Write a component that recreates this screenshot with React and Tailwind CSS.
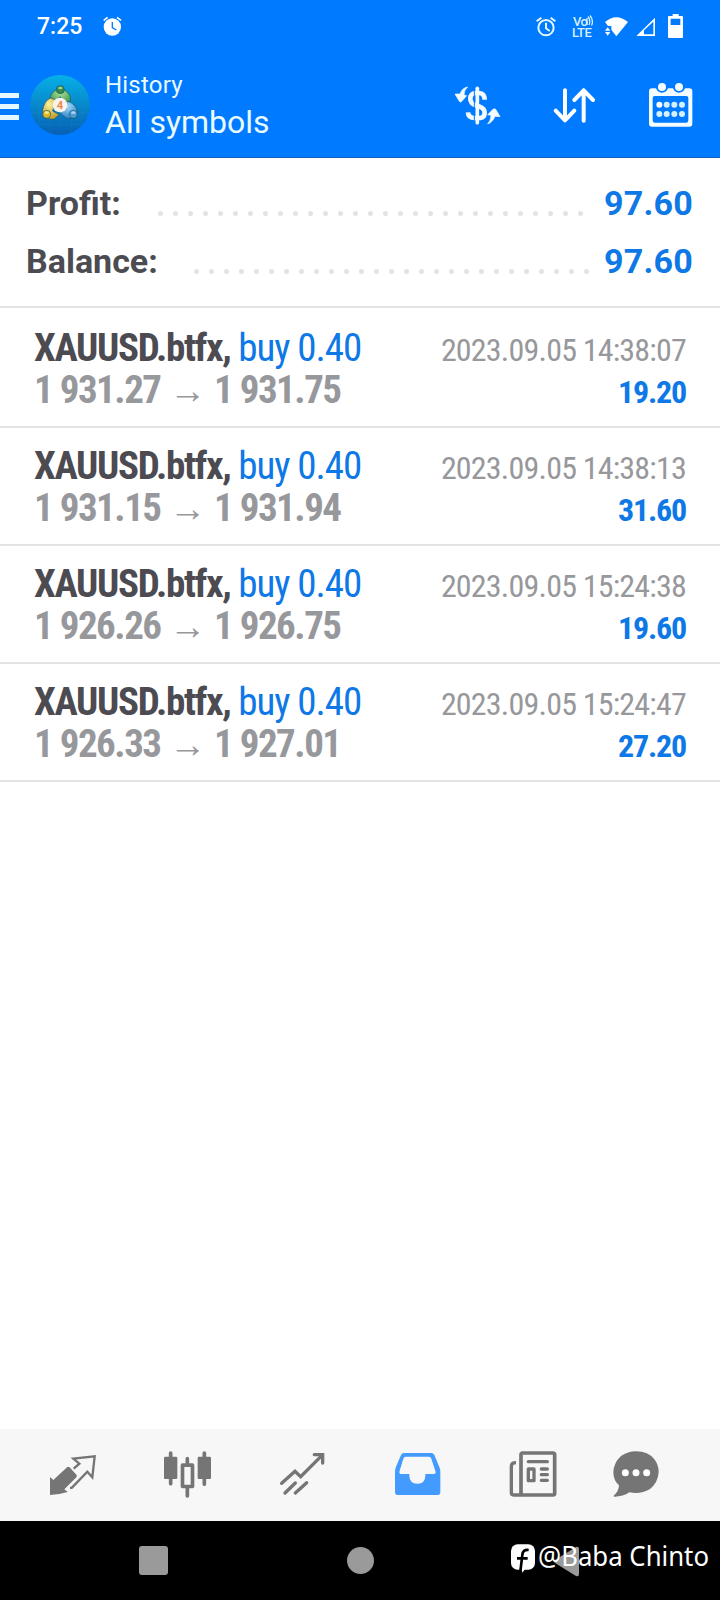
const deals = [
  { id: 1, open: '1 931.27', close: '1 931.75', time: '2023.09.05 14:38:07', profit: '19.20' },
  { id: 2, open: '1 931.15', close: '1 931.94', time: '2023.09.05 14:38:13', profit: '31.60' },
  { id: 3, open: '1 926.26', close: '1 926.75', time: '2023.09.05 15:24:38', profit: '19.60' },
  { id: 4, open: '1 926.33', close: '1 927.01', time: '2023.09.05 15:24:47', profit: '27.20' },
];

function StatusBar() {
  return (
    <div className="flex h-[53px] items-start pt-[10px] text-white">
      <span className="ml-[37px] w-[63px] text-[23px] leading-[34px] font-medium">7:25</span>
      {/* Alarm, filled */}
      <svg className="w-[26px] h-[30px]" viewBox="300 30 78 90" fill="none">
        <circle cx="337" cy="81" r="26" fill="#fff" />
        <path d="M311 61l12-9M363 61l-12-9" stroke="#fff" strokeWidth="5" />
        <path d="M337 66v17l12 7" stroke="#007aff" strokeWidth="4" />
      </svg>

      {/* Alarm, outline */}
      <svg className="ml-[407px] w-[27px] h-[30px]" viewBox="339 30 81 90" fill="none" stroke="#e4f7ff" strokeWidth="6">
        <circle cx="378" cy="83" r="23" />
        <path d="M350 64l14-11M406 64l-14-11M378 68v17l11 8" />
      </svg>
      <div className="ml-[12px] mt-[5px] w-[24px] h-[25px] relative text-[#d6f0ff] font-medium">
        <div className="ml-[1px] text-[13px] leading-[13px] tracking-[-0.6px]">Vo</div>
        <div className="text-[13px] leading-[10px] tracking-[-0.4px]">LTE</div>
        <svg className="absolute left-[13px] top-0 w-[9px] h-[12px]" viewBox="0 0 9 12" fill="none" stroke="currentColor" strokeWidth="1.3">
          <path d="M2 3v7M3 1.500q3 4 1 8.500M5 .5q4 5 1.500 10" />
        </svg>
      </div>
      <svg className="ml-[7px] w-[28px] h-[30px]" viewBox="549 30 84 90" fill="#fff">
        <path d="M555 66Q589 37 624 66L589 109L574 89V78L564 78Z" />
        <path d="M555 92l8-10 8 10zM555 96h16l-8 11z" />
      </svg>
      <svg className="ml-[4px] w-[24px] h-[30px]" viewBox="645 30 72 90" fill="#fff">
        <path fillRule="evenodd" d="M649 108L705 53V108ZM672 91V103H700V65Z" />
      </svg>
      <svg className="ml-[7px] w-[20px] h-[30px]" viewBox="738 30 60 90" fill="#fff">
        <path fillRule="evenodd" d="M758 42h18v6h10q3 0 3 3v60q0 3-3 3h-39q-3 0-3-3v-60q0-3 3-3h11zM752 56v19h29v-19z" />
      </svg>
    </div>
  );
}

function AppLogo() {
  return (
    <svg className="ml-[11px] mt-[22px] w-[60px] h-[60px]" viewBox="0 0 180 180">
      <defs>
        <linearGradient id="disc" x1="0" y1="0" x2="0" y2="1">
          <stop offset="0" stopColor="#06b0e8" />
          <stop offset="0.5" stopColor="#0788ca" />
          <stop offset="1" stopColor="#075fb5" />
        </linearGradient>
        <radialGradient id="green" cx=".5" cy=".2" r=".9">
          <stop offset="0" stopColor="#a9e493" />
          <stop offset="1" stopColor="#237b3c" />
        </radialGradient>
        <radialGradient id="yellow" cx=".4" cy=".3" r=".8">
          <stop offset="0" stopColor="#fff19a" />
          <stop offset="1" stopColor="#b59120" />
        </radialGradient>
        <radialGradient id="blue" cx=".5" cy=".3" r=".8">
          <stop offset="0" stopColor="#a1dbfa" />
          <stop offset="1" stopColor="#1a70b7" />
        </radialGradient>
      </defs>
      <circle cx="90" cy="90" r="90" fill="url(#disc)" />
      <path d="M28 25V155M60 6V174M92 0V180M124 6V174M155 28V152M18 39H162M4 70H176M4 112H176M22 148H158" stroke="#35a6df" strokeWidth="1" opacity=".3" />
      <g stroke="#17566b" strokeWidth="2">
        <path d="M60 76Q60 45 90 43Q123 46 122 78L109 94L90 65L74 82Z" fill="url(#green)" />
        <path d="M61 69Q42 77 37 110Q38 133 72 133L88 119L68 108L78 75Z" fill="url(#yellow)" />
        <path d="M111 78Q137 84 143 112Q139 134 111 131L82 108L107 103Z" fill="url(#blue)" />
        <circle cx="91" cy="44" r="12" fill="#358b45" />
        <circle cx="50" cy="118" r="12" fill="#dcb62b" />
        <circle cx="130" cy="118" r="12" fill="#4e9bd3" />
      </g>
      <ellipse cx="91" cy="39" rx="7" ry="4" fill="#9cd28c" />
      <ellipse cx="50" cy="113" rx="7" ry="4" fill="#f8e782" />
      <ellipse cx="130" cy="113" rx="7" ry="4" fill="#a4d5f4" />
      <circle cx="90" cy="90" r="22" fill="#f7f4ef" />
      <text x="90" y="102" textAnchor="middle" fontSize="34" fontWeight="700" fill="#ee8949">4</text>
    </svg>
  );
}

function Toolbar() {
  return (
    <div className="flex h-[104px] items-start text-[#e9fbff]">
      <div className="mt-[40px] flex w-[19px] flex-col gap-[6px]">
        <div className="h-[5px] bg-[#e6f8ff]" />
        <div className="h-[5px] bg-[#e6f8ff]" />
        <div className="h-[5px] bg-[#e6f8ff]" />
      </div>
      <AppLogo />
      <div className="ml-[15px] mt-[15px] w-[348px]">
        <div className="text-[24px] leading-[34px] tracking-[0.2px]">History</div>
        <div className="text-[32px] leading-[41px]">All symbols</div>
      </div>

      {/* Deals filter */}
      <svg className="mt-[27px] w-[50px] h-[50px]" viewBox="99 240 150 150" fill="none" stroke="#f4fcff">
        <path d="M172 265V368" strokeWidth="11" strokeLinecap="round" />
        <path d="M194 299Q194 280 177 279H166Q151 281 151 296Q151 309 165 315L179 320Q194 326 194 338Q194 352 181 354H164Q145 354 144 337" strokeWidth="14" />
        <path d="M163 272V361" stroke="#007aff" strokeWidth="3" />
        <path d="M143 261Q127 263 120 282L105 282L118 304Q121 309 126 303L140 287L132 285Q132 270 143 261Z" fill="#f4fcff" strokeWidth="2" />
        <path d="M203 372Q218 367 225 349L240 350L228 329Q224 324 219 328L203 344L213 346Q213 361 203 372Z" fill="#f4fcff" strokeWidth="2" />
      </svg>
      {/* Sort */}
      <svg className="ml-[48px] mt-[27px] w-[48px] h-[50px]" viewBox="393 240 144 150" fill="none" stroke="#fff" strokeWidth="12" strokeLinecap="round" strokeLinejoin="round">
        <path d="M435 271V361M407 332L435 361L463 332M491 362V271M463 300L491 271L519 300" />
      </svg>
      {/* Calendar */}
      <svg className="ml-[48px] mt-[27px] w-[50px] h-[50px]" viewBox="681 240 150 150" fill="#f4fcff">
        <path fillRule="evenodd" d="M696 265H708Q713 278 726 278Q739 278 744 265H759Q764 278 777 278Q790 278 795 265H808Q817 265 817 274V371Q817 380 808 380H696Q687 380 687 371V274Q687 265 696 265ZM704 288Q698 288 698 294V361Q698 368 704 368H799Q805 368 805 361V294Q805 288 799 288Z" />
        <circle cx="726" cy="261" r="12" />
        <circle cx="777" cy="261" r="12" />
        <g fill="#d5f1ff">
          <circle cx="718" cy="314" r="9" fill="#fff" />
          <circle cx="740" cy="314" r="9" />
          <circle cx="763" cy="314" r="9" />
          <circle cx="786" cy="314" r="9" />
          <circle cx="718" cy="342" r="9" />
          <circle cx="740" cy="342" r="9" />
          <circle cx="763" cy="342" r="9" />
          <circle cx="786" cy="342" r="9" />
        </g>
      </svg>
    </div>
  );
}

function Dots({ count }) {
  return (
    <div className="mb-[16px] flex gap-[10px]">
      {Array.from({ length: count }).map((_, index) => (
        <div key={index} className="size-[5px] rounded-full bg-[#e3e3e3]" />
      ))}
    </div>
  );
}

function Summary() {
  return (
    <div className="border-b-2 border-[#e3e3e3] py-[16px] pl-[26px] pr-[27px] text-[34px] leading-[58px] font-bold text-[#4c4b51]">
      <div className="flex h-[58px] items-end">
        <span className="w-[132px]">Profit:</span>
        <Dots count={29} />
        <span className="ml-auto tracking-[0.2px] text-[#0d78e6]">97.60</span>
      </div>
      <div className="flex h-[58px] items-end">
        <span className="w-[168px]">Balance:</span>
        <Dots count={27} />
        <span className="ml-auto tracking-[0.2px] text-[#0d78e6]">97.60</span>
      </div>
    </div>
  );
}

function DealRow({ deal }) {
  return (
    <div className="h-[118px] border-b-2 border-[#e3e3e3] pt-[17px] pl-[34px] pr-[34px] leading-[42px] [font-stretch:75%]">
      <div className="flex h-[42px] items-baseline justify-between">
        <div className="text-[39px] whitespace-nowrap">
          <span className="font-bold tracking-[-1.34px] text-[#4c4b51]">XAUUSD.btfx, </span>
          <span className="tracking-[-1.05px] text-[#0d78e6]">buy 0.40</span>
        </div>
        <div className="text-[32px] tracking-[-0.8px] whitespace-nowrap text-[#97989c]">{deal.time}</div>
      </div>
      <div className="flex h-[42px] items-baseline font-bold">
        <span className="w-[135px] text-[39px] tracking-[-1.5px] text-[#97989c]">{deal.open}</span>
        <span className="w-[45px] text-[37px] font-normal text-[#97989c] font-['Liberation_Sans',sans-serif]">→</span>
        <span className="text-[39px] tracking-[-1.5px] text-[#97989c]">{deal.close}</span>
        <span className="ml-auto text-[32px] tracking-[-1.2px] text-[#0d78e6]">{deal.profit}</span>
      </div>
    </div>
  );
}

function TabBar() {
  return (
    <div className="flex h-[92px] items-start bg-[#f7f7f7] pt-[19px]">
      {/* Quotes */}
      <svg className="ml-[46px] w-[54px] h-[52px]" viewBox="138 84 162 156" fill="none">
        <path d="M150 171L160 180L202 141H208L230 165V171L193 208L203 216L178 222L150 225Z" fill="#757575" />
        <path d="M221 146L238 131L220 116L284 109L277 172L262 155L216 203L210 204" stroke="#757575" strokeWidth="7" />
      </svg>
      {/* Charts */}
      <svg className="ml-[60px] w-[55px] h-[52px]" viewBox="480 84 165 156" fill="none" stroke="#757575">
        <path d="M512 99V191M562 116V130M562 204V228M613 99V193" strokeWidth="11" strokeLinecap="round" />
        <rect x="492" y="110" width="40" height="67" rx="4" fill="#757575" stroke="none" />
        <rect x="593" y="110" width="40" height="67" rx="4" fill="#757575" stroke="none" />
        <rect x="547.500" y="135.500" width="30" height="64" strokeWidth="11" strokeLinejoin="round" />
      </svg>
      {/* Trade */}
      <svg className="ml-[61px] w-[54px] h-[52px]" viewBox="828 84 162 156" fill="none" stroke="#757575" strokeWidth="10" strokeLinecap="round">
        <path d="M845 190L885 154L902 170L966 106M943 104H968V129M855 219L886 189M886 219L920 188" />
      </svg>
      {/* History */}
      <svg className="ml-[60px] w-[56px] h-[52px]" viewBox="90 84 168 156" fill="#439aff">
        <path fillRule="evenodd" d="M132 99H214Q220 99 223 105L238 141Q241 147 241 155V216Q241 225 233 225H113Q105 225 105 216V155Q105 147 108 140L123 105Q126 99 132 99ZM137 110Q132 110 130 116L119 152Q116 162 124 162H148V168Q149 191 172 191Q196 190 196 167V162H221Q229 162 226 153L214 116Q212 110 207 110Z" />
      </svg>
      {/* News */}
      <svg className="ml-[59px] w-[56px] h-[52px]" viewBox="435 84 168 156" fill="none" stroke="#757575" strokeLinecap="round" strokeLinejoin="round">
        <rect x="483" y="99" width="101" height="126" rx="5" strokeWidth="11" />
        <path d="M468 128Q454 128 454 139V218Q454 225 463 225H485" strokeWidth="10" strokeLinecap="butt" />
        <path d="M505 125H562M544 147H562M544 164H562M544 181H562" strokeWidth="10" />
        <rect x="505" y="147" width="17" height="35" strokeWidth="10" />
      </svg>
      {/* Messages */}
      <svg className="ml-[48px] w-[54px] h-[52px]" viewBox="747 84 162 156" fill="#757575">
        <path d="M828 94Q865 94 883 118Q896 134 896 157Q894 188 870 207Q841 224 808 217Q789 230 764 230Q758 230 763 225Q776 214 777 196Q760 181 760 157Q761 128 783 108Q803 94 828 94Z" />
        <g fill="#fff">
          <circle cx="796" cy="158" r="10.500" />
          <circle cx="828" cy="158" r="10.500" />
          <circle cx="860" cy="158" r="10.500" />
        </g>
      </svg>
    </div>
  );
}

function SystemNav() {
  return (
    <div className="relative flex h-[79px] items-start bg-black pt-[25px]">
      <div className="ml-[139px] size-[29px] rounded-[3px] bg-[#9a9a9a]" />
      <div className="ml-[179px] mt-px size-[27px] rounded-full bg-[#9a9a9a]" />
      <svg className="ml-[180px] w-[26px] h-[31px]" viewBox="0 0 26 31" fill="#9a9a9a">
        <path d="M1 14L22 1Q25 0 25 3V28Q25 31 22 30L1 17Q-.5 15.500 1 14Z" />
      </svg>
      {/* Author tag over the back button */}
      <div className="absolute left-[510px] top-[16px] flex items-start text-white">
        <svg className="mt-[7px] w-[26px] h-[29px]" viewBox="450 371 78 87">
          <rect x="453" y="372" width="72" height="76" rx="20" fill="#fff" />
          <path d="M484 444L487 457L497 444Z" fill="#fff" />
          <path d="M506 389Q488 387 487 404L481 454M471 414H503" fill="none" stroke="#000" strokeWidth="8" />
        </svg>
        <span className="ml-[2px] origin-left scale-x-[0.92] text-[28px] leading-[36px] whitespace-nowrap font-['Noto_Sans',sans-serif]">@Baba Chinto</span>
      </div>
    </div>
  );
}

export default function App() {
  return (
    <div className="flex h-[1600px] w-[720px] flex-col overflow-hidden bg-white font-['Roboto',sans-serif]">
      <header className="h-[158px] border-b border-[#1263bd] bg-[#007aff]">
        <StatusBar />
        <Toolbar />
      </header>
      <main className="flex-1">
        <Summary />
        <div className="pt-[2px]">
          {deals.map((deal) => (
            <DealRow key={deal.id} deal={deal} />
          ))}
        </div>
      </main>
      <TabBar />
      <SystemNav />
    </div>
  );
}
